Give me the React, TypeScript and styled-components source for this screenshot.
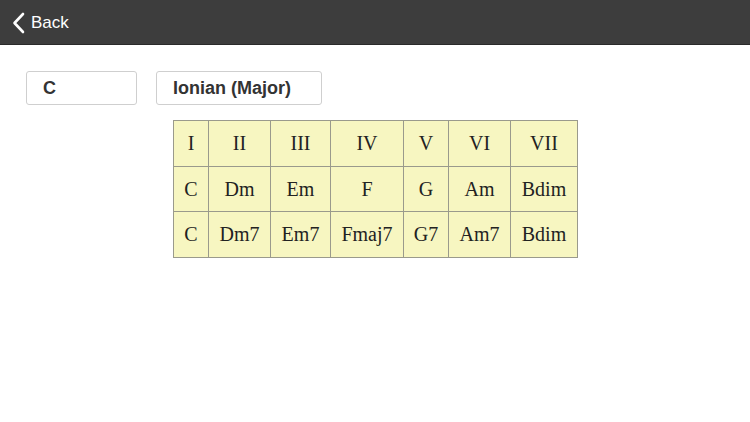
import React from "react";
import styled, { createGlobalStyle } from "styled-components";

const Global = createGlobalStyle`
  html, body { margin: 0; padding: 0; background: #ffffff; }
  body { font-family: "Liberation Sans", Arial, sans-serif; }
`;

const Page = styled.div`
  width: 750px;
  height: 422px;
  background: #ffffff;
  display: flex;
  flex-direction: column;
`;

const NavBar = styled.div`
  height: 44px;
  background: #3d3d3d;
  border-bottom: 1px solid #2a2a2a;
  display: flex;
  align-items: center;
  padding-left: 12px;
  box-sizing: content-box;
`;

const BackButton = styled.div`
  display: flex;
  align-items: center;
  gap: 6px;
  color: #ffffff;
  font-size: 17px;
  padding-top: 1px;
`;

const Content = styled.div`
  display: flex;
  flex-direction: column;
  padding: 26px 0 0 26px;
`;

const Controls = styled.div`
  display: flex;
  gap: 19px;
`;

const Field = styled.div<{ $w: number }>`
  width: ${(p) => p.$w}px;
  height: 34px;
  box-sizing: border-box;
  border: 1px solid #cfcfcf;
  border-radius: 3px;
  display: flex;
  align-items: center;
  padding-left: 16px;
  font-weight: bold;
  font-size: 18px;
  color: #333333;
`;

const TableWrap = styled.div`
  padding: 15px 0 0 147px;
`;

const Table = styled.table`
  border-collapse: collapse;
  background: #f7f6c1;
  font-family: "Liberation Serif", "Times New Roman", serif;
  font-size: 20px;
  color: #222222;
`;

const Cell = styled.td<{ $w: number }>`
  width: ${(p) => p.$w}px;
  height: 45.7px;
  box-sizing: border-box;
  border: 1px solid #9a9a8c;
  text-align: center;
  padding: 0;
`;

const widths = [35, 62, 60, 73, 45, 62, 67];
const rows = [
  ["I", "II", "III", "IV", "V", "VI", "VII"],
  ["C", "Dm", "Em", "F", "G", "Am", "Bdim"],
  ["C", "Dm7", "Em7", "Fmaj7", "G7", "Am7", "Bdim"],
];

export default function App() {
  return (
    <Page>
      <Global />
      <NavBar>
        <BackButton>
          <svg width="13" height="22" viewBox="0 0 13 22">
            <path d="M11 2 L2.5 11 L11 20" fill="none" stroke="#ffffff" strokeWidth="2.6" strokeLinecap="round" strokeLinejoin="round" />
          </svg>
          <span>Back</span>
        </BackButton>
      </NavBar>
      <Content>
        <Controls>
          <Field $w={111}>C</Field>
          <Field $w={166}>Ionian (Major)</Field>
        </Controls>
        <TableWrap>
          <Table>
            <tbody>
              {rows.map((r, i) => (
                <tr key={i}>
                  {r.map((c, j) => (
                    <Cell key={j} $w={widths[j]}>{c}</Cell>
                  ))}
                </tr>
              ))}
            </tbody>
          </Table>
        </TableWrap>
      </Content>
    </Page>
  );
}
